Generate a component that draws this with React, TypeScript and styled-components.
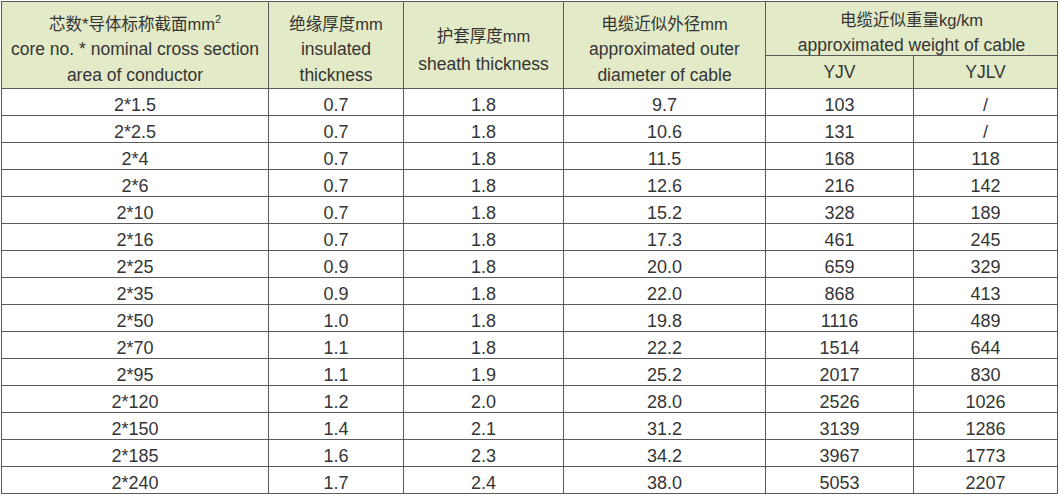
import React from 'react';
import styled, { createGlobalStyle } from 'styled-components';

const GlobalStyle = createGlobalStyle`
  html, body {
    margin: 0;
    padding: 0;
    background: #ffffff;
  }
`;

const Page = styled.div`
  padding: 1px 0 0 1px;
  width: 1060px;
  height: 496px;
  box-sizing: border-box;
  overflow: hidden;
`;

const Table = styled.table`
  border-collapse: collapse;
  table-layout: fixed;
  width: 1056px;
  font-family: "Liberation Sans", Arial, "Noto Sans CJK SC", sans-serif;
  color: #353535;
`;

const HeadCell = styled.th<{ $height: number }>`
  background: #e2eac7;
  border: 1px solid #5a5a5a;
  font-weight: normal;
  font-size: 17.5px;
  text-align: center;
  vertical-align: middle;
  padding: 0;
  height: ${({ $height }) => `${$height}px`};
`;

// fixed-height box so the header rows keep their size; text may overhang a little
const HeadText = styled.div<{ $lh: number; $top: number; $height: number }>`
  line-height: ${({ $lh }) => `${$lh}px`};
  padding-top: ${({ $top }) => `${$top}px`};
  height: ${({ $height }) => `${$height}px`};
  box-sizing: border-box;
  overflow: visible;
`;

const Cjk = styled.span`
  font-size: 16.5px;
`;

const Sup = styled.sup`
  font-size: 11px;
  line-height: 0;
  vertical-align: 7px;
`;

const Cell = styled.td`
  border: 1px solid #5a5a5a;
  text-align: center;
  vertical-align: top;
  font-size: 18px;
  height: 26px;
  padding: 6px 0 0;
  line-height: 20px;
  box-sizing: border-box;
`;

const rows: string[][] = [
  ['2*1.5', '0.7', '1.8', '9.7', '103', '/'],
  ['2*2.5', '0.7', '1.8', '10.6', '131', '/'],
  ['2*4', '0.7', '1.8', '11.5', '168', '118'],
  ['2*6', '0.7', '1.8', '12.6', '216', '142'],
  ['2*10', '0.7', '1.8', '15.2', '328', '189'],
  ['2*16', '0.7', '1.8', '17.3', '461', '245'],
  ['2*25', '0.9', '1.8', '20.0', '659', '329'],
  ['2*35', '0.9', '1.8', '22.0', '868', '413'],
  ['2*50', '1.0', '1.8', '19.8', '1116', '489'],
  ['2*70', '1.1', '1.8', '22.2', '1514', '644'],
  ['2*95', '1.1', '1.9', '25.2', '2017', '830'],
  ['2*120', '1.2', '2.0', '28.0', '2526', '1026'],
  ['2*150', '1.4', '2.1', '31.2', '3139', '1286'],
  ['2*185', '1.6', '2.3', '34.2', '3967', '1773'],
  ['2*240', '1.7', '2.4', '38.0', '5053', '2207'],
];

const widths = [267, 135, 160, 202, 148, 144];

export default function App() {
  return (
    <Page>
      <GlobalStyle />
      <Table>
        <colgroup>
          {widths.map((w, i) => <col key={i} style={{ width: w }} />)}
        </colgroup>
        <thead>
          <tr>
            <HeadCell rowSpan={2} $height={86}>
              <HeadText $lh={25.5} $top={9} $height={85}>
                <Cjk>芯数*导体标称截面mm</Cjk><Sup>2</Sup><br />
                core no. * nominal cross section<br />
                area of conductor
              </HeadText>
            </HeadCell>
            <HeadCell rowSpan={2} $height={86}>
              <HeadText $lh={25.5} $top={9} $height={85}>
                <Cjk>绝缘厚度mm</Cjk><br />insulated<br />thickness
              </HeadText>
            </HeadCell>
            <HeadCell rowSpan={2} $height={86}>
              <HeadText $lh={28} $top={19} $height={85}>
                <Cjk>护套厚度mm</Cjk><br />sheath thickness
              </HeadText>
            </HeadCell>
            <HeadCell rowSpan={2} $height={86}>
              <HeadText $lh={25.5} $top={9} $height={85}>
                <Cjk>电缆近似外径mm</Cjk><br />approximated outer<br />diameter of cable
              </HeadText>
            </HeadCell>
            <HeadCell colSpan={2} $height={53}>
              <HeadText $lh={25} $top={6} $height={53}>
                <Cjk>电缆近似重量kg/km</Cjk><br />approximated weight of cable
              </HeadText>
            </HeadCell>
          </tr>
          <tr>
            <HeadCell $height={32}>YJV</HeadCell>
            <HeadCell $height={32}>YJLV</HeadCell>
          </tr>
        </thead>
        <tbody>
          {rows.map((r) => (
            <tr key={r[0]}>
              {r.map((v, i) => <Cell key={i}>{v}</Cell>)}
            </tr>
          ))}
        </tbody>
      </Table>
    </Page>
  );
}
